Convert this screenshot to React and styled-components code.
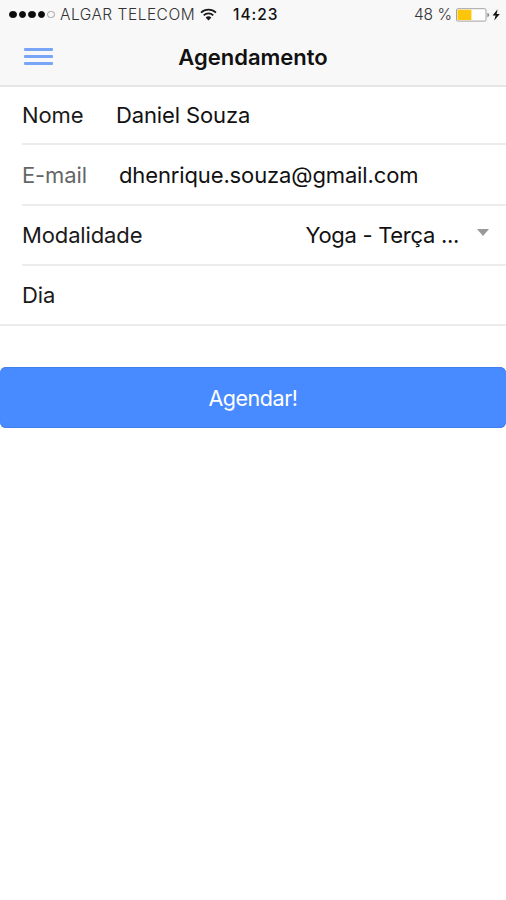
import React, { useState } from "react";
import styled, { createGlobalStyle } from "styled-components";

const SIGNAL = [true, true, true, true, false];
const BATTERY = 48;

const App = () => {
  const [name, setName] = useState("Daniel Souza");
  const [email, setEmail] = useState("dhenrique.souza@gmail.com");

  return (
    <Page>
      <GlobalStyle />
      <Header>
        <StatusBar>
          <Signal>
            {SIGNAL.map((filled, index) => (
              <Dot key={index} $filled={filled} />
            ))}
          </Signal>
          <Carrier>ALGAR TELECOM</Carrier>
          <WifiIcon />
          <Clock>14:23</Clock>
          <Percent>{BATTERY} %</Percent>
          <BatteryIcon level={BATTERY} />
        </StatusBar>
        <Toolbar>
          <MenuButton aria-label="Menu">
            <MenuLine />
            <MenuLine />
            <MenuLine />
          </MenuButton>
          <Title>Agendamento</Title>
        </Toolbar>
      </Header>

      <List>
        <Row $height={58}>
          <Label $width={94}>Nome</Label>
          <Input value={name} onChange={e => setName(e.target.value)} />
        </Row>
        <Row $height={61}>
          <Label $width={97} $muted>
            E-mail
          </Label>
          <Input value={email} onChange={e => setEmail(e.target.value)} />
        </Row>
        <Row $height={60}>
          <Label>Modalidade</Label>
          <Selected>Yoga - Terça ...</Selected>
          <Caret />
        </Row>
        <Row $height={58} $last>
          <Label>Dia</Label>
        </Row>
      </List>

      <Submit>Agendar!</Submit>
    </Page>
  );
};

const WifiIcon = () => (
  <Wifi viewBox="0 0 17 13">
    <path d="M1 4.6a10.8 10.8 0 0 1 15 0" />
    <path d="M3.7 7.3a7 7 0 0 1 9.6 0" />
    <path d="M5.6 9.6a4.2 4.2 0 0 1 5.8 0L8.5 12.6z" className="core" />
  </Wifi>
);

const BatteryIcon = ({ level }) => (
  <Battery viewBox="0 0 46 14">
    <rect x="0.5" y="0.7" width="29.5" height="12.4" rx="1.2" fill="#fff" stroke="#a3a3a3" />
    <rect x="1.5" y="1.7" width={(level / 100) * 29} height="10.4" fill="#fdc60b" />
    <path d="M31.3 5v4.2c1.4-.3 2-1.1 2-2.1s-.6-1.8-2-2.1z" fill="#8c8c8c" />
    <path d="M41.6 1.3L36.6 7.6h3l-1.4 5 5.6-6.5h-3.2z" fill="#111" />
  </Battery>
);

const GlobalStyle = createGlobalStyle`
  body {
    margin: 0;
    background: #fff;
  }

  * {
    box-sizing: border-box;
  }
`;

const Page = styled.div`
  height: 900px;
  overflow: hidden;
  background: #fff;
  color: #111;
  font-family: Inter, "Liberation Sans", sans-serif;
`;

const Header = styled.header`
  height: 87px;
  background: #f8f8f8;
  border-bottom: 2px solid #e6e6e6;
`;

const StatusBar = styled.div`
  display: flex;
  align-items: center;
  height: 29px;
  padding: 0 4px 0 9px;
  font-size: 15.5px;
  line-height: 29px;
  white-space: pre;
`;

const Signal = styled.div`
  display: flex;
  gap: 2px;
  width: 51px;
`;

const Dot = styled.i`
  width: 7.6px;
  height: 7.6px;
  border-radius: 50%;
  border: 1px solid ${({ $filled }) => ($filled ? "#0c0c0c" : "#a0a0a0")};
  background: ${({ $filled }) => ($filled ? "#0c0c0c" : "transparent")};
`;

const Carrier = styled.span`
  width: 140px;
  color: #333;
  font-weight: 300;
  letter-spacing: 0.5px;
`;

const Wifi = styled.svg`
  width: 17px;
  height: 13px;
  margin-right: 16px;
  fill: none;
  stroke: #1a1a1a;
  stroke-width: 1.7;

  .core {
    fill: #1a1a1a;
    stroke: none;
  }
`;

const Clock = styled.span`
  font-weight: 500;
  letter-spacing: 1px;
`;

const Percent = styled.span`
  margin-left: auto;
  margin-right: 4px;
  color: #333;
  font-weight: 300;
`;

const Battery = styled.svg`
  width: 46px;
  height: 14px;
`;

const Toolbar = styled.div`
  display: grid;
  grid-template-columns: 54px 1fr 54px;
  align-items: center;
  height: 55px;
`;

const MenuButton = styled.button`
  display: flex;
  flex-direction: column;
  gap: 4px;
  width: 29px;
  margin-left: 24px;
  padding: 0;
  border: 0;
  background: none;
`;

const MenuLine = styled.span`
  height: 3px;
  border-radius: 1px;
  background: #79a5f6;
`;

const Title = styled.h1`
  margin: 0;
  font-size: 22px;
  font-weight: 600;
  line-height: 30px;
  text-align: center;
`;

const List = styled.main`
  border-bottom: 2px solid #ebebeb;
`;

const Row = styled.div`
  display: flex;
  align-items: center;
  height: ${({ $height }) => $height}px;
  margin-left: 22px;
  border-bottom: ${({ $last }) => ($last ? "0" : "2px solid #ececec")};
`;

const Label = styled.label`
  flex: none;
  width: ${({ $width }) => ($width ? `${$width}px` : "auto")};
  color: ${({ $muted }) => ($muted ? "#666" : "#1a1a1a")};
  font-size: 22px;
  letter-spacing: -0.13px;
`;

const Input = styled.input`
  flex: 1;
  min-width: 0;
  padding: 0;
  border: 0;
  outline: none;
  background: none;
  color: #111;
  font: inherit;
  font-size: 22px;
  letter-spacing: -0.13px;
`;

const Selected = styled.span`
  margin-left: auto;
  font-size: 22px;
  letter-spacing: -0.3px;
`;

const Caret = styled.i`
  margin: 0 17px 5px 18px;
  border: 6.5px solid transparent;
  border-top: 7px solid #999;
  border-bottom: 0;
`;

const Submit = styled.button`
  display: block;
  width: 100%;
  height: 61px;
  margin-top: 41px;
  padding: 0;
  border: 0;
  border-radius: 6px;
  background: #488aff;
  color: #fff;
  font: inherit;
  font-size: 21.5px;
  letter-spacing: -0.45px;
  box-shadow: inset 0 1px #3f7fee, inset 0 -1px #3f7fee;
`;

export default App;
